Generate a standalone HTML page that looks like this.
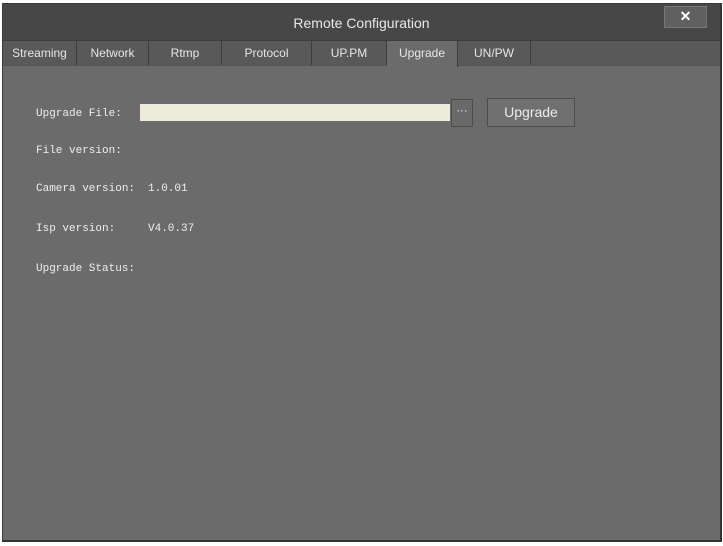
<!DOCTYPE html>
<html><head><style>
body{margin:0;width:723px;height:546px;background:#fff;position:relative;overflow:hidden;font-family:"Liberation Sans",sans-serif}
.win{position:absolute;left:2px;top:3px;width:717px;height:536px;background:#6b6b6b;border:1px solid #3a3a3a;border-right:2px solid #333;border-bottom:2px solid #333}
.title{position:absolute;left:0;top:0;width:717px;height:36px;background:#474747;color:#e8e8e8;font-size:14px;text-align:center;line-height:38px}
.close{position:absolute;left:661px;top:2px;width:41px;height:20px;background:#606060;border:1px solid #777;color:#fff;font-weight:bold;text-align:center;line-height:19px;font-size:14px}
.tabs{position:absolute;left:0;top:36px;width:717px;height:24px;background:#595959;border-top:1px solid #3d3d3d;border-bottom:1px solid #555}
.tab{position:absolute;top:0;height:24px;line-height:24px;text-align:center;color:#e6e6e6;font-size:12px;border-right:1px solid #3d3d3d;box-sizing:border-box}
.tab.a{background:#6b6b6b;height:26px}
.lbl{position:absolute;font-family:"Liberation Mono",monospace;font-size:11px;color:#eee}
.inp{position:absolute;left:137px;top:100px;width:310px;height:17px;background:#ecebdc}
.dots{position:absolute;left:448px;top:95px;width:20px;height:26px;border:1px solid #4c4c4c;background:#6a6a6a;color:#eee;font-size:11px;text-align:center;line-height:22px}
.btn{position:absolute;left:484px;top:94px;width:86px;height:27px;border:1px solid #4c4c4c;background:#707070;color:#ececec;font-size:14px;text-align:center;line-height:27px}
</style></head><body>
<div class="win">
<div class="title">Remote Configuration</div>
<div class="close">✕</div>
<div class="tabs">
<div class="tab" style="left:0;width:74px">Streaming</div>
<div class="tab" style="left:74px;width:72px">Network</div>
<div class="tab" style="left:146px;width:73px">Rtmp</div>
<div class="tab" style="left:219px;width:90px">Protocol</div>
<div class="tab" style="left:309px;width:75px">UP.PM</div>
<div class="tab a" style="left:384px;width:71px">Upgrade</div>
<div class="tab" style="left:455px;width:73px">UN/PW</div>
</div>
<div class="lbl" style="left:33px;top:104px">Upgrade File:</div>
<div class="inp"></div>
<div class="dots">···</div>
<div class="btn">Upgrade</div>
<div class="lbl" style="left:33px;top:141px">File version:</div>
<div class="lbl" style="left:33px;top:179px">Camera version:</div>
<div class="lbl" style="left:145px;top:179px">1.0.01</div>
<div class="lbl" style="left:33px;top:219px">Isp version:</div>
<div class="lbl" style="left:145px;top:219px">V4.0.37</div>
<div class="lbl" style="left:33px;top:259px">Upgrade Status:</div>
</div>
</body></html>
